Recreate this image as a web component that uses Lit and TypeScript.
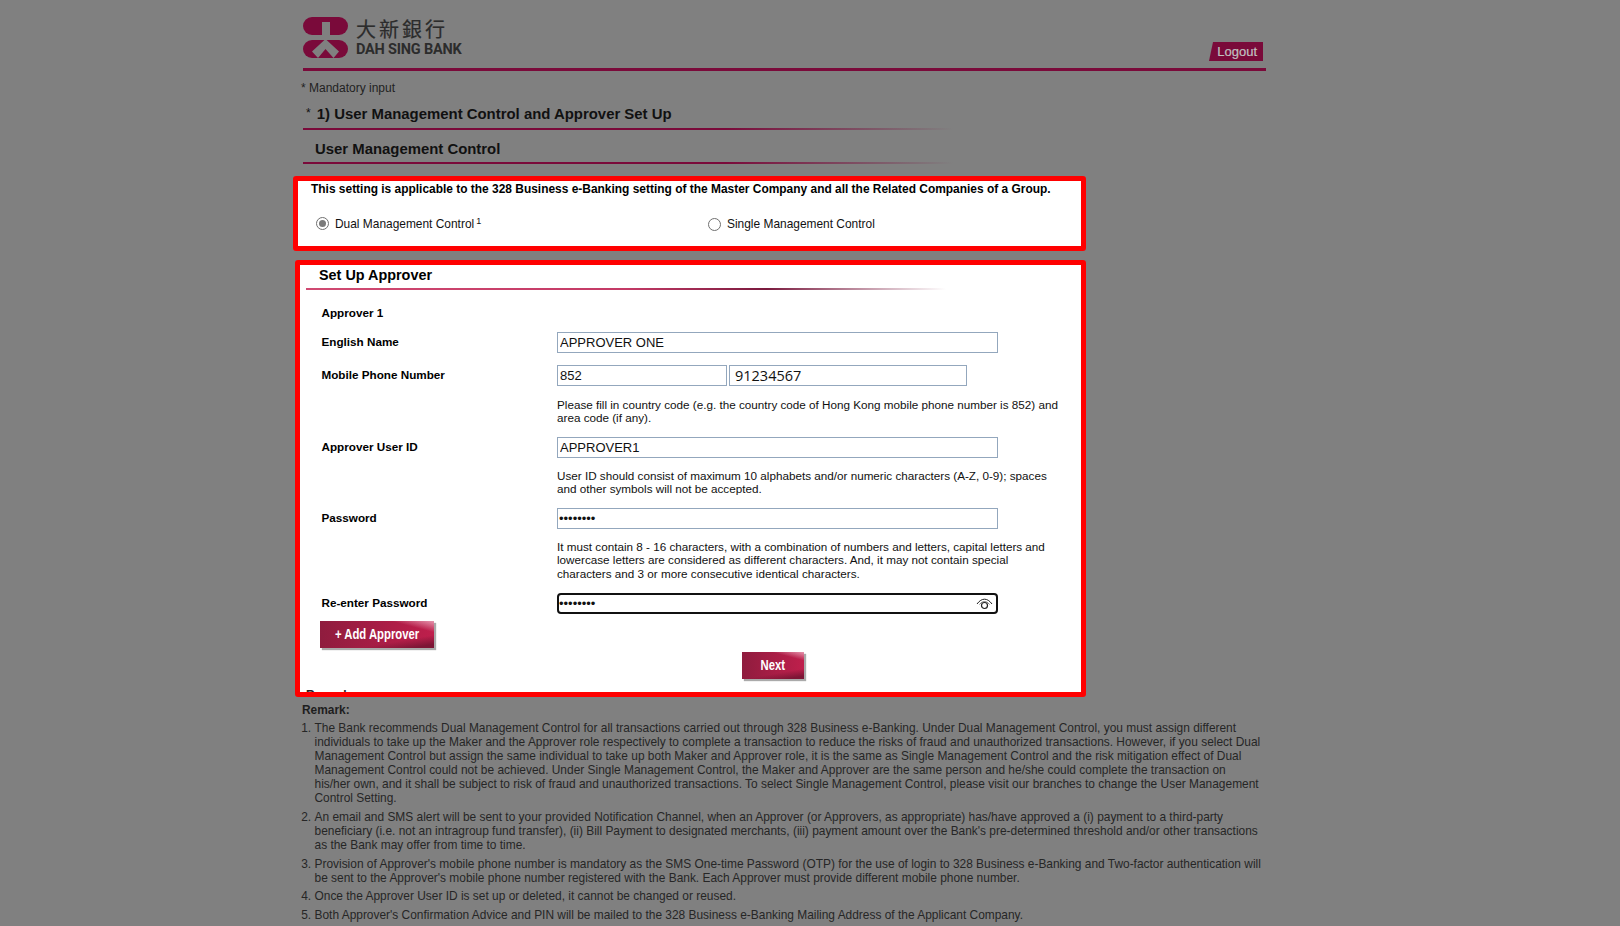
import { LitElement, html, css } from "lit";
import { customElement } from "lit/decorators.js";

@customElement("app-root")
export class AppRoot extends LitElement {
  static styles = css`
    :host { display: block; height: 926px; overflow: hidden; background: #808080; font-family: "Liberation Sans", Arial, sans-serif; font-size: 12px; color: #000; }
    .page { width: 963px; margin-left: 303px; }
    .header { height: 68px; border-bottom: 3px solid #7a0a3a; display: flex; justify-content: space-between; box-sizing: content-box; }
    .brand { display: flex; gap: 8px; padding-top: 17px; }
    .brand svg { display: block; }
    .brand-text { display: flex; flex-direction: column; color: #2c2c2c; }
    .cn { font-family: "Noto Sans CJK TC", sans-serif; font-size: 20px; line-height: 24px; letter-spacing: 3px; margin-top: 0; -webkit-text-stroke: 0.2px #2c2c2c; }
    .en { font-family: "Roboto", "Liberation Sans", sans-serif; font-weight: 700; font-size: 14.5px; line-height: 15px; letter-spacing: -0.2px; margin-top: 1px; }
    .logout { align-self: flex-start; margin: 42px 3px 0 0; width: 54px; height: 19px; background: #7a0a3a; color: #c0c0c0; font-size: 13px; line-height: 19px; text-align: right; padding-right: 6px; box-sizing: border-box; clip-path: polygon(4px 0, 100% 0, 100% 100%, 0 100%); -webkit-text-stroke: 0.2px #c0c0c0; }
    .mand { color: #222; margin: 10px 0 0 -2px; line-height: 14px; }
    .h1 { font-size: 14.92px; font-weight: 700; line-height: 18px; margin: 10px 0 0 3px; color: #111; }
    .h1 .star { font-size: 12px; font-weight: 400; position: relative; top: -2px; margin-right: 2px; }
    .rule { height: 2px; width: 650px; background: linear-gradient(90deg, #7a0a3a 0%, #7a0a3a 65%, #808080 100%); }
    .h1 + .rule { margin-top: 4px; }
    .h2 { font-size: 14.9px; font-weight: 700; line-height: 18px; margin: 10px 0 0 12px; color: #111; }
    .h2 + .rule { margin-top: 4px; }
    .box { background: #fff; border: 5px solid #f00; border-radius: 3px; box-sizing: border-box; }
    .box1 { width: 793px; height: 75px; margin: 12px 0 0 -10px; padding: 1px 0 0 13px; }
    .box1 .note { font-weight: 700; line-height: 14px; font-size: 11.94px; }
    .radios { display: flex; margin: 20px 0 0 5px; }
    .radio { display: flex; align-items: center; gap: 6px; line-height: 14px; color: #111; font-size: 11.93px; }
    .radio.first { width: 391px; }
    .radio.second { margin-left: 1px; padding-top: 1px; }
    .dot { display: block; flex: none; width: 13px; height: 13px; border-radius: 50%; border: 1px solid #707070; box-sizing: border-box; background: #fff; position: relative; }
    .dot.on::after { content: ""; position: absolute; inset: 2px; border-radius: 50%; background: #7a7a7a; }
    .radio sup { font-size: 9px; line-height: 0; position: relative; top: -4px; vertical-align: baseline; margin-left: 2px; }
    .box2 { width: 791px; height: 437px; margin: 9px 0 0 -8px; overflow: hidden; padding: 0 0 0 6px; }
    .set { font-size: 14.4px; font-weight: 700; line-height: 18px; margin-left: 13px; padding-top: 1px; }
    .rule2 { height: 2px; width: 640px; margin-top: 4px; background: linear-gradient(90deg, #d04a72 0%, #c43a66 50%, #7a1a3e 72%, #fff 100%); }
    .form { padding-left: 15.5px; font-size: 11.7px; }
    .ap1 { font-weight: 700; line-height: 14px; margin-top: 16px; }
    .row { display: grid; grid-template-columns: 235.5px 1fr; }
    .m12 { margin-top: 12px; }
    .m13 { margin-top: 13px; }
    .lab { font-weight: 700; line-height: 14px; padding-top: 3px; }
    .field { display: flex; gap: 2px; position: relative; width: 441px; }
    input.t { box-sizing: border-box; height: 21px; border: 1px solid #93a7bd; padding: 0 2px; font: 13px "Liberation Sans", sans-serif; color: #111; outline: none; border-radius: 0; background: #fff; width: 441px; }
    input.cc { width: 170px; font-size: 13px; }
    input.ph { width: 238px; font: 14.5px "Open Sans", sans-serif; padding-left: 5px; }
    input.pw { font-size: 13px; padding: 0 1px; }
    input.focus { border: 2px solid #111; border-radius: 4px; padding: 0; }
    .eye { position: absolute; right: 5px; top: 5px; }
    .help { margin-left: 235.5px; line-height: 13.45px; width: 504px; color: #111; }
    .r1 { margin-top: 12px; }
    .r3 { margin-top: 11px; }
    .btn { color: #fff; font-weight: 700; font-size: 14.5px; text-align: center; box-shadow: 2px 2px 1px #aaa; background:
      linear-gradient(195deg, rgba(235, 170, 190, .85) 0%, rgba(235, 170, 190, 0) 20%),
      linear-gradient(170deg, rgba(125, 21, 53, 0) 72%, #7d1535 92%),
      linear-gradient(90deg, #8f1c3e, #bf1f4c); }
    .btn span { display: inline-block; transform: scaleX(0.78); white-space: nowrap; }
    .add { width: 114px; height: 27px; line-height: 26px; margin-top: 7px; margin-left: -1.5px; }
    .next { width: 62px; height: 27px; line-height: 26px; margin: 4px 0 0 420.5px; }
    .cut { margin: 9px 0 0 -15.5px; font-weight: 700; line-height: 14px; color: #222; font-size: 12px; }
    .remark { color: #262626; margin: 6px 0 0 -1px; width: 962px; font-size: 11.93px; }
    .remark .tt { font-weight: 700; line-height: 14px; color: #1e1e1e; }
    ol { margin: 4px 0 0; padding: 0 0 0 12.5px; list-style-position: outside; }
    li { line-height: 14px; margin-bottom: 4.8px; }
  `;

  render() {
    return html`
      <div class="page">
        <div class="header">
          <div class="brand">
            <svg width="45" height="41" viewBox="0 0 45 41">
              <rect x="0" y="0" width="45" height="18" rx="9" fill="#7a0a3a" />
              <rect x="0" y="23" width="45" height="18" rx="9" fill="#7a0a3a" />
              <path d="M19 5h8v18h-8z" fill="#808080" />
              <path d="M22.5 22L36 34.5 30.5 41 22.5 32 15 41 9 34.5z" fill="#808080" />
            </svg>
            <div class="brand-text"><div class="cn">大新銀行</div><div class="en">DAH SING BANK</div></div>
          </div>
          <div class="logout">Logout</div>
        </div>
        <div class="mand">* Mandatory input</div>
        <div class="h1"><span class="star">*</span> 1) User Management Control and Approver Set Up</div>
        <div class="rule"></div>
        <div class="h2">User Management Control</div>
        <div class="rule"></div>

        <div class="box box1">
          <div class="note">This setting is applicable to the 328 Business e-Banking setting of the Master Company and all the Related Companies of a Group.</div>
          <div class="radios">
            <div class="radio first"><span class="dot on"></span><span>Dual Management Control<sup>1</sup></span></div>
            <div class="radio second"><span class="dot"></span><span>Single Management Control</span></div>
          </div>
        </div>

        <div class="box box2">
          <div class="set">Set Up Approver</div>
          <div class="rule2"></div>
          <div class="form">
            <div class="ap1">Approver 1</div>
            <div class="row m12">
              <div class="lab">English Name</div>
              <div class="field"><input class="t" .value=${"APPROVER ONE"} /></div>
            </div>
            <div class="row m12">
              <div class="lab">Mobile Phone Number</div>
              <div class="field"><input class="t cc" .value=${"852"} /><input class="t ph" .value=${"91234567"} /></div>
            </div>
            <div class="help r1">Please fill in country code (e.g. the country code of Hong Kong mobile phone number is 852) and area code (if any).</div>
            <div class="row m12">
              <div class="lab">Approver User ID</div>
              <div class="field"><input class="t" .value=${"APPROVER1"} /></div>
            </div>
            <div class="help r3">User ID should consist of maximum 10 alphabets and/or numeric characters (A-Z, 0-9); spaces and other symbols will not be accepted.</div>
            <div class="row m12">
              <div class="lab">Password</div>
              <div class="field"><input class="t pw" type="password" .value=${"12345678"} /></div>
            </div>
            <div class="help r3">It must contain 8 - 16 characters, with a combination of numbers and letters, capital letters and lowercase letters are considered as different characters. And, it may not contain special characters and 3 or more consecutive identical characters.</div>
            <div class="row m13">
              <div class="lab">Re-enter Password</div>
              <div class="field">
                <input class="t pw focus" type="password" .value=${"12345678"} />
                <svg class="eye" width="17" height="12" viewBox="0 0 17 12" fill="none" stroke="#222" stroke-width="1">
                  <path d="M1 6C3.5 2.6 6 1.2 8.5 1.2S13.5 2.6 16 6" />
                  <path d="M3.5 6.5C5 4.4 6.8 3.6 8.5 3.6s3.5.8 5 2.9" stroke-width=".6"/>
                  <circle cx="8.5" cy="7.5" r="3" stroke-width="1.2" />
                </svg>
              </div>
            </div>
            <div class="btn add"><span>+ Add Approver</span></div>
            <div class="btn next"><span>Next</span></div>
            <div class="cut">Remark:</div>
          </div>
        </div>

        <div class="remark">
          <div class="tt">Remark:</div>
          <ol>
            <li>The Bank recommends Dual Management Control for all transactions carried out through 328 Business e-Banking. Under Dual Management Control, you must assign different individuals to take up the Maker and the Approver role respectively to complete a transaction to reduce the risks of fraud and unauthorized transactions. However, if you select Dual Management Control but assign the same individual to take up both Maker and Approver role, it is the same as Single Management Control and the risk mitigation effect of Dual Management Control could not be achieved. Under Single Management Control, the Maker and Approver are the same person and he/she could complete the transaction on his/her own, and it shall be subject to risk of fraud and unauthorized transactions. To select Single Management Control, please visit our branches to change the User Management Control Setting.</li>
            <li>An email and SMS alert will be sent to your provided Notification Channel, when an Approver (or Approvers, as appropriate) has/have approved a (i) payment to a third-party beneficiary (i.e. not an intragroup fund transfer), (ii) Bill Payment to designated merchants, (iii) payment amount over the Bank's pre-determined threshold and/or other transactions as the Bank may offer from time to time.</li>
            <li>Provision of Approver's mobile phone number is mandatory as the SMS One-time Password (OTP) for the use of login to 328 Business e-Banking and Two-factor authentication will be sent to the Approver's mobile phone number registered with the Bank. Each Approver must provide different mobile phone number.</li>
            <li>Once the Approver User ID is set up or deleted, it cannot be changed or reused.</li>
            <li>Both Approver's Confirmation Advice and PIN will be mailed to the 328 Business e-Banking Mailing Address of the Applicant Company.</li>
          </ol>
        </div>
      </div>
    `;
  }
}
